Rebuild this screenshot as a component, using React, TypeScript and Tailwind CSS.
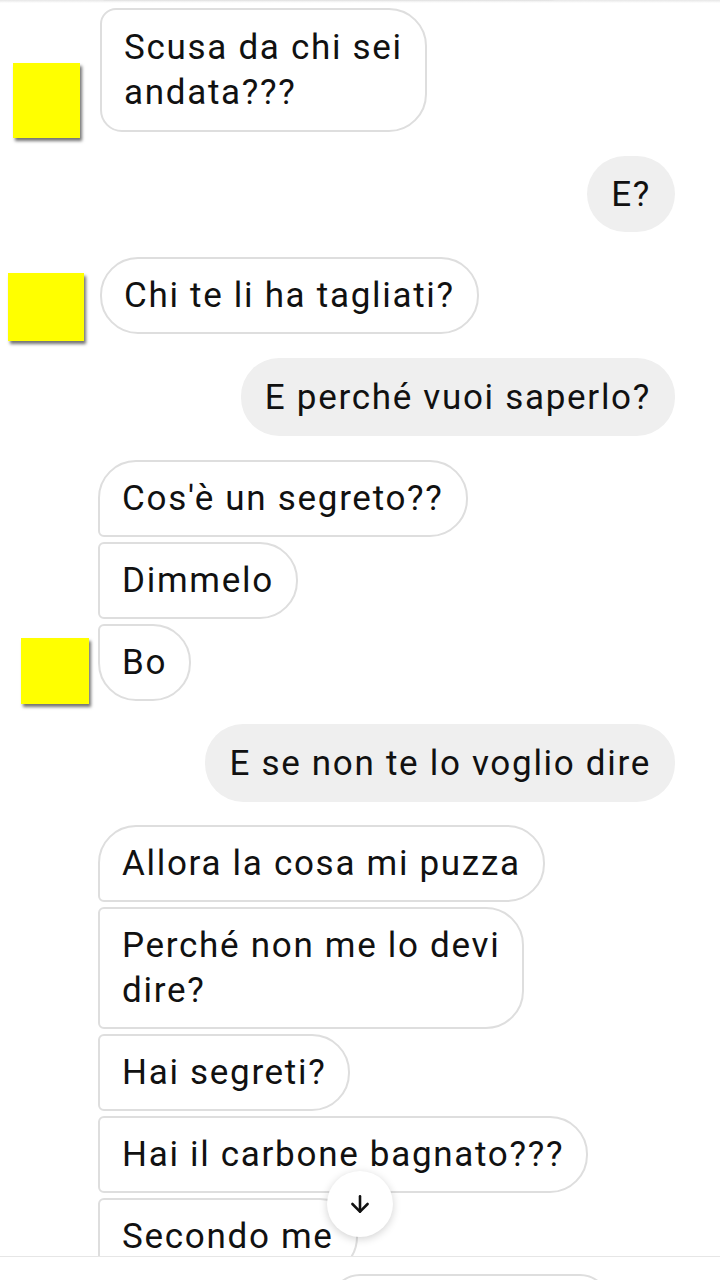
import React from "react";
import { ArrowDown } from "lucide-react";

function Recv({
  children,
  tl = "rounded-tl-[38px]",
  bl = "rounded-bl-[38px]",
  extra = "",
}: {
  children: React.ReactNode;
  tl?: string;
  bl?: string;
  extra?: string;
}) {
  return (
    <div
      className={`self-start whitespace-nowrap bg-white border-2 border-[#dedede] rounded-tr-[38px] rounded-br-[38px] ${tl} ${bl} px-[22px] py-[14px] text-[35px] tracking-[1.7px] leading-[45px] text-[#111] ${extra}`}
    >
      {children}
    </div>
  );
}

function Sent({ children, extra = "" }: { children: React.ReactNode; extra?: string }) {
  return (
    <div
      className={`self-end whitespace-nowrap bg-[#efefef] rounded-[38px] px-[24px] py-[16.5px] text-[35px] tracking-[1.7px] leading-[45px] text-[#111] mr-[45px] ${extra}`}
    >
      {children}
    </div>
  );
}

function Avatar({ cls }: { cls: string }) {
  return (
    <div
      className={`absolute bg-[#ffff00] shadow-[2px_3px_3px_rgba(0,0,0,0.55)] ${cls}`}
    />
  );
}

export default function App() {
  return (
    <div
      className="relative w-[720px] h-[1280px] overflow-hidden bg-white"
      style={{ fontFamily: "Roboto, 'Noto Sans', Arial, sans-serif" }}
    >
      <div className="h-[1256px] overflow-hidden flex flex-col">
        {/* group 1 */}
        <div className="relative flex flex-col pl-[100px] mt-[-76px]">
          <Recv tl="rounded-tl-[38px]" bl="rounded-bl-[6px]" extra="w-[485px] rounded-br-[30px]">
            &nbsp;
          </Recv>
          <Recv tl="rounded-tl-[16px]" bl="rounded-bl-[22px]" extra="mt-[7px] !py-[15px] rounded-tr-[28px] rounded-br-[28px]">
            Scusa da chi sei
            <br />
            andata???
          </Recv>
          <Avatar cls="left-[13px] bottom-[-6px] w-[67px] h-[75px]" />
        </div>

        <Sent extra="mt-[24px] !py-[15.5px] rounded-[30px]">E?</Sent>

        <div className="relative flex flex-col pl-[100px] mt-[25px]">
          <Recv>Chi te li ha tagliati?</Recv>
          <Avatar cls="left-[8px] bottom-[-7px] w-[76px] h-[68px]" />
        </div>

        <Sent extra="mt-[24px]">E perché vuoi saperlo?</Sent>

        <div className="relative flex flex-col pl-[98px] mt-[24px] gap-[5px]">
          <Recv bl="rounded-bl-[6px]">Cos'è un segreto??</Recv>
          <Recv tl="rounded-tl-[6px]" bl="rounded-bl-[6px]">Dimmelo</Recv>
          <Recv tl="rounded-tl-[6px]">Bo</Recv>
          <Avatar cls="left-[21px] bottom-[-3px] w-[68px] h-[66px]" />
        </div>

        <Sent extra="mt-[23px]">E se non te lo voglio dire</Sent>

        <div className="relative flex flex-col pl-[98px] mt-[23px] gap-[5px]">
          <Recv bl="rounded-bl-[6px]">Allora la cosa mi puzza</Recv>
          <Recv tl="rounded-tl-[6px]" bl="rounded-bl-[6px]" extra="rounded-tr-[32px] rounded-br-[32px]">
            Perché non me lo devi
            <br />
            dire?
          </Recv>
          <Recv tl="rounded-tl-[6px]" bl="rounded-bl-[6px]">Hai segreti?</Recv>
          <Recv tl="rounded-tl-[6px]" bl="rounded-bl-[6px]">Hai il carbone bagnato???</Recv>
          <Recv tl="rounded-tl-[6px]" bl="rounded-bl-[6px]">Secondo me</Recv>
        </div>
      </div>

      {/* top faint header shadow */}
      <div className="absolute top-0 left-0 w-full h-[3px] bg-gradient-to-b from-[#e6e6e6] to-transparent" />

      {/* bottom composer */}
      <div className="absolute left-0 top-[1256px] w-full h-[24px] bg-white border-t border-[#e6e6e6]">
        <div className="absolute left-[330px] top-[17px] w-[280px] h-[60px] rounded-full border-2 border-[#dedede]" />
      </div>

      {/* scroll-down button */}
      <div className="absolute left-[327px] top-[1171px] w-[66px] h-[66px] rounded-full bg-white shadow-[0_2px_8px_rgba(0,0,0,0.18)] flex items-center justify-center">
        <ArrowDown size={26} strokeWidth={2.4} color="#111" />
      </div>
    </div>
  );
}
